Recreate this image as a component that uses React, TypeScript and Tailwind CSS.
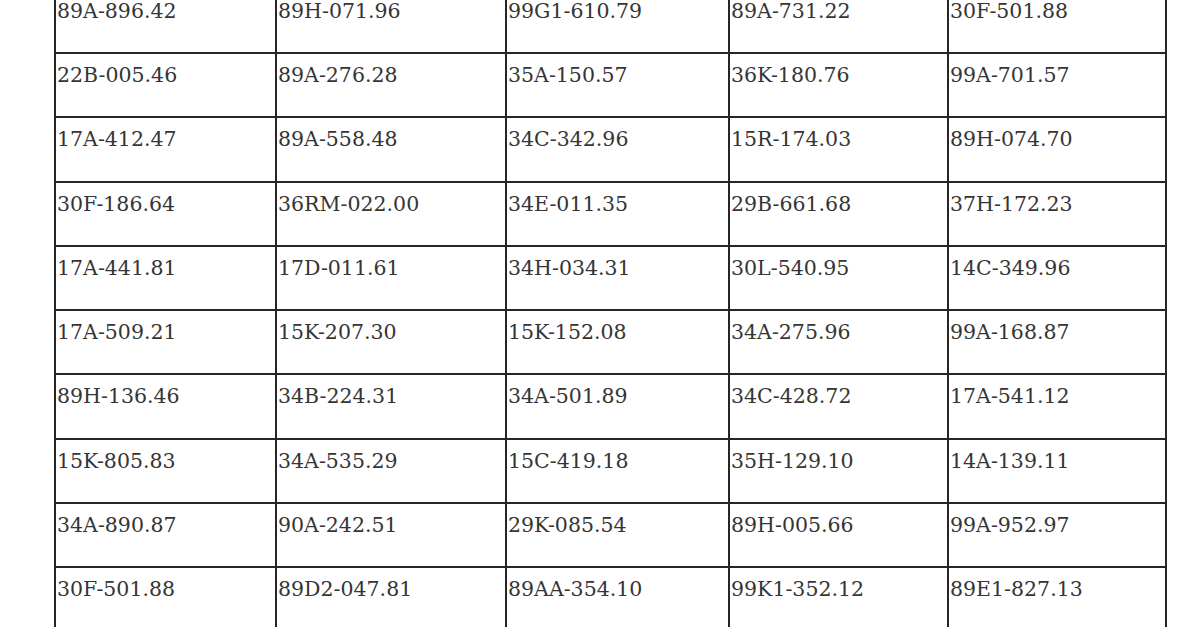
const rows: string[][] = [
  ["89A-896.42", "89H-071.96", "99G1-610.79", "89A-731.22", "30F-501.88"],
  ["22B-005.46", "89A-276.28", "35A-150.57", "36K-180.76", "99A-701.57"],
  ["17A-412.47", "89A-558.48", "34C-342.96", "15R-174.03", "89H-074.70"],
  ["30F-186.64", "36RM-022.00", "34E-011.35", "29B-661.68", "37H-172.23"],
  ["17A-441.81", "17D-011.61", "34H-034.31", "30L-540.95", "14C-349.96"],
  ["17A-509.21", "15K-207.30", "15K-152.08", "34A-275.96", "99A-168.87"],
  ["89H-136.46", "34B-224.31", "34A-501.89", "34C-428.72", "17A-541.12"],
  ["15K-805.83", "34A-535.29", "15C-419.18", "35H-129.10", "14A-139.11"],
  ["34A-890.87", "90A-242.51", "29K-085.54", "89H-005.66", "99A-952.97"],
  ["30F-501.88", "89D2-047.81", "89AA-354.10", "99K1-352.12", "89E1-827.13"],
];

export default function App() {
  return (
    <div className="w-[1200px] h-[627px] overflow-hidden bg-white">
      {/* table is cropped at the top and bottom of the shot */}
      <div
        className="ml-[54px] mt-[-12.25px] grid w-max grid-cols-[221px_230px_223px_219px_218px] auto-rows-[64.25px] border-r-2 border-b-2 border-[#262626]"
        style={{ fontFamily: "'DejaVu Serif', serif" }}
      >
        {rows.flat().map((plate, i) => (
          <div
            key={i}
            className="border-l-2 border-t-2 border-[#262626] pl-[1px] pt-[7px] text-[20.5px] leading-[28px] text-[#353535]"
          >
            {plate}
          </div>
        ))}
      </div>
    </div>
  );
}
